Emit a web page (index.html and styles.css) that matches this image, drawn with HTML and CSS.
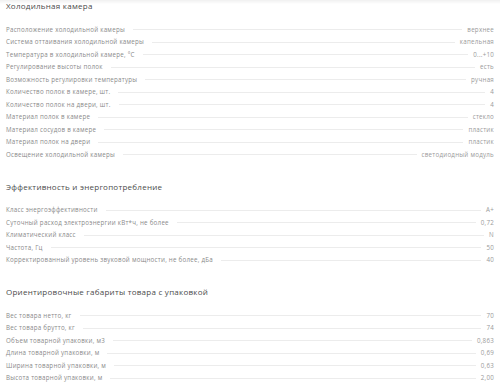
FILE: index.html
```html
<!DOCTYPE html>
<html lang="ru">
<head>
<meta charset="utf-8">
<link rel="stylesheet" href="styles.css">
</head>
<body>
<div class="topshade"></div>
<main class="page">
  <section class="group">
    <h2 class="title">Холодильная камера</h2>
    <div class="row"><span class="label">Расположение холодильной камеры</span><span class="line"></span><span class="value">верхнее</span></div>
    <div class="row"><span class="label">Система оттаивания холодильной камеры</span><span class="line"></span><span class="value">капельная</span></div>
    <div class="row"><span class="label">Температура в холодильной камере, °С</span><span class="line"></span><span class="value">0...+10</span></div>
    <div class="row"><span class="label">Регулирование высоты полок</span><span class="line"></span><span class="value">есть</span></div>
    <div class="row"><span class="label">Возможность регулировки температуры</span><span class="line"></span><span class="value">ручная</span></div>
    <div class="row"><span class="label">Количество полок в камере, шт.</span><span class="line"></span><span class="value">4</span></div>
    <div class="row"><span class="label">Количество полок на двери, шт.</span><span class="line"></span><span class="value">4</span></div>
    <div class="row"><span class="label">Материал полок в камере</span><span class="line"></span><span class="value">стекло</span></div>
    <div class="row"><span class="label">Материал сосудов в камере</span><span class="line"></span><span class="value">пластик</span></div>
    <div class="row"><span class="label">Материал полок на двери</span><span class="line"></span><span class="value">пластик</span></div>
    <div class="row"><span class="label">Освещение холодильной камеры</span><span class="line"></span><span class="value">светодиодный модуль</span></div>
  </section>
  <section class="group">
    <h2 class="title">Эффективность и энергопотребление</h2>
    <div class="row"><span class="label">Класс энергоэффективности</span><span class="line"></span><span class="value">A+</span></div>
    <div class="row"><span class="label">Суточный расход электроэнергии кВт*ч, не более</span><span class="line"></span><span class="value">0,72</span></div>
    <div class="row"><span class="label">Климатический класс</span><span class="line"></span><span class="value">N</span></div>
    <div class="row"><span class="label">Частота, Гц</span><span class="line"></span><span class="value">50</span></div>
    <div class="row"><span class="label">Корректированный уровень звуковой мощности, не более, дБа</span><span class="line"></span><span class="value">40</span></div>
  </section>
  <section class="group">
    <h2 class="title">Ориентировочные габариты товара с упаковкой</h2>
    <div class="row"><span class="label">Вес товара нетто, кг</span><span class="line"></span><span class="value">70</span></div>
    <div class="row"><span class="label">Вес товара брутто, кг</span><span class="line"></span><span class="value">74</span></div>
    <div class="row"><span class="label">Объем товарной упаковки, м3</span><span class="line"></span><span class="value">0,863</span></div>
    <div class="row"><span class="label">Длина товарной упаковки, м</span><span class="line"></span><span class="value">0,69</span></div>
    <div class="row"><span class="label">Ширина товарной упаковки, м</span><span class="line"></span><span class="value">0,63</span></div>
    <div class="row"><span class="label">Высота товарной упаковки, м</span><span class="line"></span><span class="value">2,00</span></div>
  </section>
</main>
</body>
</html>
```
FILE: styles.css
```css
html, body {
  margin: 0;
  padding: 0;
  background: #ffffff;
}
body {
  font-family: "Open Sans", "DejaVu Sans", sans-serif;
  color: #8a8a8a;
  overflow: hidden;
}
.topshade {
  position: fixed;
  top: 0;
  left: 0;
  right: 0;
  height: 4px;
  background: linear-gradient(to bottom, rgba(0,0,0,0.06), rgba(0,0,0,0));
}
.page {
  padding: 0 6px;
}
.group {
  margin-bottom: 20px;
}
.title {
  margin: 0 0 12px;
  font-size: 8px;
  line-height: 11px;
  font-weight: 400;
  color: #4a4a4a;
  letter-spacing: 0.25px;
}
.row {
  display: flex;
  align-items: center;
  height: 12.5px;
  font-size: 6.2px;
  letter-spacing: 0.25px;
  white-space: nowrap;
}
.line {
  flex: 1;
  border-top: 1px solid #ececec;
  margin: 1px 5px 0 8px;
}
.value {
  color: #9a9a9a;
}
```
